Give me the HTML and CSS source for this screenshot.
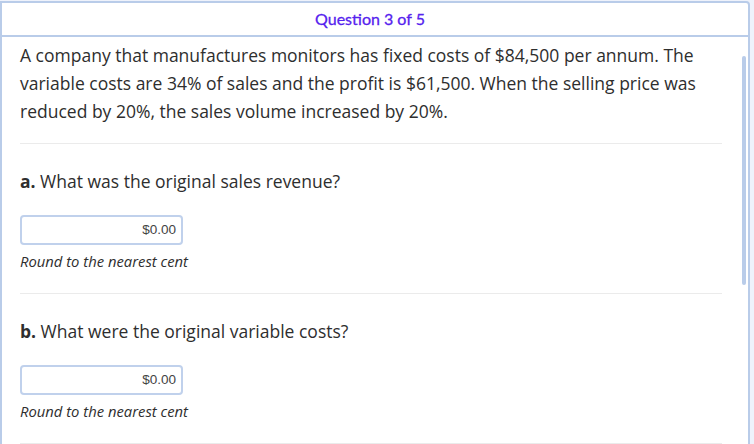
FILE: index.html
```html
<!DOCTYPE html>
<html>
<head>
<meta charset="utf-8">
<link rel="stylesheet" href="styles.css">
</head>
<body>
<div class="frame">
  <div class="header">Question 3 of 5</div>
  <div class="content">
    <p class="intro">A company that manufactures monitors has fixed costs of $84,500 per annum. The variable costs are 34% of sales and the profit is $61,500. When the selling price was reduced by 20%, the sales volume increased by 20%.</p>
    <div class="part">
      <div class="question"><b>a.</b> What was the original sales revenue?</div>
      <div class="answer">$0.00</div>
      <div class="hint">Round to the nearest cent</div>
    </div>
    <div class="part">
      <div class="question"><b>b.</b> What were the original variable costs?</div>
      <div class="answer">$0.00</div>
      <div class="hint">Round to the nearest cent</div>
    </div>
    <div class="part"></div>
  </div>
  <div class="thumb"></div>
</div>
</body>
</html>
```

FILE: styles.css
```css
html, body {
  margin: 0;
  padding: 0;
  background: #eef2fb;
  overflow: hidden;
}
body {
  padding-top: 1px;
  font-family: "Open Sans", "Liberation Sans", sans-serif;
  color: #2e2e2e;
}
.frame {
  position: relative;
  box-sizing: border-box;
  width: 750px;
  height: 460px;
  background: #fff;
  border: 2px solid #b9cce9;
  border-top-right-radius: 4px;
}
.header {
  height: 32px;
  border-bottom: 2px solid #b9cce9;
  font-family: Lato, "Open Sans", sans-serif;
  font-size: 16px;
  line-height: 32px;
  text-align: center;
  color: #5522ee;
  -webkit-text-stroke: 0.3px #5522ee;
  padding-right: 10px;
}
.content {
  padding: 4px 26px 0 18px;
}
.intro {
  margin: 0;
  font-size: 17.5px;
  line-height: 28px;
  padding-bottom: 18px;
}
.part {
  border-top: 1px solid #ebebeb;
  padding-top: 23px;
  height: 126px;
}
.question {
  font-size: 17.5px;
  line-height: 28px;
}
.question b {
  font-weight: 700;
}
.answer {
  box-sizing: border-box;
  margin-top: 20px;
  width: 163px;
  height: 30px;
  border: 2px solid #c0d1ec;
  border-radius: 4px;
  padding-right: 5px;
  text-align: right;
  font-family: "Liberation Sans", Arial, sans-serif;
  font-size: 13.5px;
  line-height: 26px;
  color: #444;
}
.hint {
  margin-top: 6px;
  font-size: 14.8px;
  line-height: 20px;
  font-style: italic;
}
.thumb {
  position: absolute;
  left: 740px;
  top: 53px;
  width: 4px;
  height: 229px;
  border-radius: 2px;
  background: #b9cce9;
}
```
